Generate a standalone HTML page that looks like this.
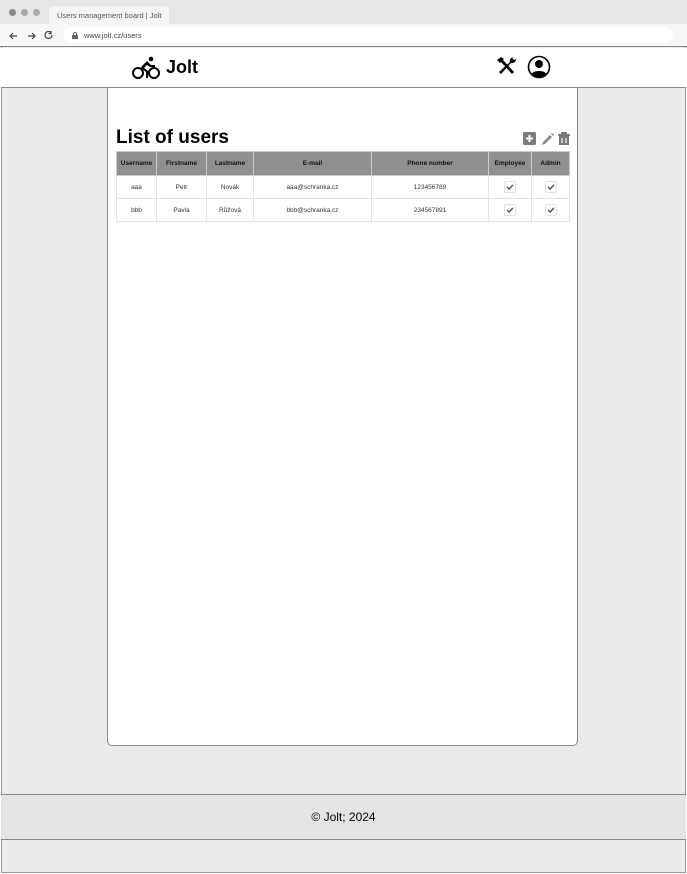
<!DOCTYPE html>
<html><head><style>
*{margin:0;padding:0;box-sizing:border-box}
body{width:687px;height:874px;background:#fff;font-family:"Liberation Sans",sans-serif;position:relative;overflow:hidden}
.frame{position:absolute;left:1px;top:0;width:685px;height:873px;border:1px solid #9a9a9a;border-top:none;background:#ebebeb}
.tabs{position:absolute;left:0;top:0;width:687px;height:24px;background:#e6e6e6}
.dot{position:absolute;top:9px;width:7px;height:7px;border-radius:50%;background:#a8a8a8}
.tab{position:absolute;left:49px;top:6px;width:120px;height:18px;background:#f5f5f5;border-radius:4px 4px 0 0;font-size:7.5px;color:#555;padding:5px 0 0 8px}
.addr{position:absolute;left:0;top:24px;width:687px;height:23px;background:#f7f7f7;border-bottom:1px solid #888}
.url{position:absolute;left:64px;top:3px;width:609px;height:16px;background:#fff;border-radius:8px;font-size:7.5px;color:#444;padding:4px 0 0 20px}
.header{position:absolute;left:1px;top:48px;width:685px;height:40px;background:#fff;border-bottom:1px solid #888}
.card{position:absolute;left:107px;top:88px;width:471px;height:658px;background:#fff;border:1px solid #8a8a8a;border-top:none;border-radius:0 0 5px 5px}
h1{position:absolute;left:116px;top:127px;font-size:19px;font-weight:bold;color:#000}
table{position:absolute;left:116px;top:151px;width:454px;border-collapse:collapse;font-size:6.5px;text-align:center}
th{background:#8f8f8f;height:24px;border:1px solid #ccc;font-weight:bold;color:#111}
td{height:23px;border:1px solid #e2e2e2;color:#333}
.cb{display:inline-block;width:12px;height:12px;border:1px solid #e0e0e0;border-radius:2px;vertical-align:middle}
.footer{position:absolute;left:1px;top:794px;width:685px;height:46px;background:#e4e4e4;border-top:1px solid #888;border-bottom:1px solid #888;text-align:center;font-size:12px;line-height:44px;color:#000}
</style></head><body>
<div class="frame"></div>
<div class="tabs"><div class="dot" style="left:9px;background:#888"></div><div class="dot" style="left:21px"></div><div class="dot" style="left:33px"></div><div class="tab">Users management board | Jolt</div></div>
<div class="addr">
<svg style="position:absolute;left:9px;top:7px" width="44" height="10" viewBox="0 0 44 10" fill="none" stroke="#444" stroke-width="1.2"><path d="M8 5H1M4 2L1 5L4 8"/><path d="M19 5h7M23 2l3 3-3 3"/><path d="M43 4a3.5 3.5 0 1 1-1-2.5M42 0v2.5h-2.5"/></svg>
<div class="url"><svg style="position:absolute;left:8px;top:5px" width="6" height="7"><rect x="0" y="3" width="6" height="4" fill="#666"/><path d="M1.5 3V2a1.5 1.5 0 0 1 3 0v1" stroke="#666" fill="none"/></svg>www.jolt.cz/users</div>
</div>
<div class="header">
<svg style="position:absolute;left:131px;top:8px" width="30" height="24" viewBox="0 0 30 24"><circle cx="6" cy="17" r="5" fill="none" stroke="#000" stroke-width="2"/><circle cx="22" cy="17" r="5" fill="none" stroke="#000" stroke-width="2"/><circle cx="19" cy="3" r="2.3"/><path d="M10 10l5-5 4 4h4v2h-5l-3-2-3 3 4 3v7h-2v-6l-5-4z"/></svg>
<div style="position:absolute;left:165px;top:9px;font-size:18px;font-weight:bold">Jolt</div>
<svg style="position:absolute;left:495px;top:8px" width="22" height="20" viewBox="0 0 22 20"><path d="M1 4l4-3 3 2-1 1 11 12-2 2L5 6 4 7z" fill="#000"/><path d="M18 1a4 4 0 0 0-4 5L3 16l2 2 10-11a4 4 0 0 0 5-4l-2 1-2-2z" fill="#000"/></svg>
<svg style="position:absolute;left:526px;top:7px" width="24" height="24" viewBox="0 0 24 24"><circle cx="12" cy="12" r="10.5" fill="none" stroke="#000" stroke-width="1.6"/><circle cx="12" cy="9" r="4" fill="#000"/><path d="M4.5 19c2-4 13-4 15 0a10 10 0 0 1-15 0z" fill="#000"/></svg>
</div>
<div class="card"></div>
<h1>List of users</h1>
<svg style="position:absolute;left:522px;top:131px" width="50" height="15" viewBox="0 0 50 15"><rect x="1" y="1" width="13" height="13" rx="1.5" fill="#7a7a7a"/><path d="M7.5 4v7M4 7.5h7" stroke="#fff" stroke-width="2"/><path d="M20 14l1-3 7-7 2 2-7 7z M29 3l1-1 2 2-1 1z" fill="#8a8a8a"/><path d="M36 3h12v2H36z M39 1h6v2h-6z M37 5h10v9H37z" fill="#7a7a7a"/><path d="M40 7v5M44 7v5" stroke="#fff" stroke-width="1.2"/></svg>
<table>
<tr><th style="width:40px">Username</th><th style="width:50px">Firstname</th><th style="width:47px">Lastname</th><th style="width:118px">E-mail</th><th style="width:117px">Phone number</th><th style="width:43px">Employee</th><th>Admin</th></tr>
<tr><td>aaa</td><td>Petr</td><td>Novák</td><td>aaa@schranka.cz</td><td>123456789</td><td><svg class="cb" viewBox="0 0 12 12"><path d="M2.5 6l2.5 2.5 4.5-5" stroke="#555" stroke-width="1.8" fill="none"/></svg></td><td><svg class="cb" viewBox="0 0 12 12"><path d="M2.5 6l2.5 2.5 4.5-5" stroke="#555" stroke-width="1.8" fill="none"/></svg></td></tr>
<tr><td>bbb</td><td>Pavla</td><td>Růžová</td><td>bbb@schranka.cz</td><td>234567891</td><td><svg class="cb" viewBox="0 0 12 12"><path d="M2.5 6l2.5 2.5 4.5-5" stroke="#555" stroke-width="1.8" fill="none"/></svg></td><td><svg class="cb" viewBox="0 0 12 12"><path d="M2.5 6l2.5 2.5 4.5-5" stroke="#555" stroke-width="1.8" fill="none"/></svg></td></tr>
</table>
<div class="footer">© Jolt; 2024</div>
</body></html>
